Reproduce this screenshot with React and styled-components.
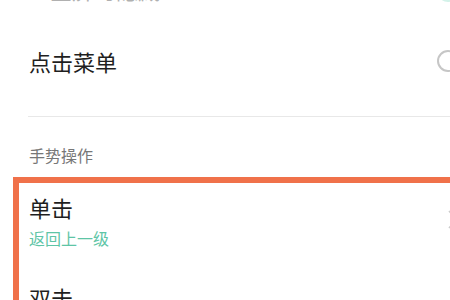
import React from "react";
import styled, { createGlobalStyle } from "styled-components";

const Global = createGlobalStyle`
  html, body { margin: 0; padding: 0; background: #ffffff; }
  body {
    font-family: "Noto Sans CJK SC", "Noto Sans", sans-serif;
    -webkit-font-smoothing: antialiased;
  }
`;

const Viewport = styled.div`
  width: 450px;
  height: 300px;
  overflow: hidden;
  background: #ffffff;
`;

const Screen = styled.div`
  width: 472px;
  display: flex;
  flex-direction: column;
`;

const PrevRow = styled.div`
  height: 50px;
  margin-top: -44px;
  padding: 0 13px 0 29px;
  display: flex;
  align-items: flex-end;
  justify-content: space-between;
  box-sizing: border-box;
`;

const PrevTitle = styled.div`
  font-size: 22px;
  line-height: 30px;
  color: #b0b0b0;
  margin-bottom: 2px;
  padding-left: 21px;
`;

const CheckedDot = styled.div`
  width: 22px;
  height: 22px;
  border-radius: 50%;
  background: #d3f2e9;
  margin-bottom: 4px;
  margin-right: 0;
`;

const ToggleRow = styled.div`
  height: 110px;
  padding: 0 13px 0 29px;
  display: flex;
  align-items: center;
  justify-content: space-between;
  box-sizing: border-box;
`;

const Title = styled.div`
  font-size: 22px;
  line-height: 30px;
  color: #1f1f1f;
`;

const Radio = styled.div`
  width: 22px;
  height: 22px;
  border-radius: 50%;
  border: 2px solid #c6c6c6;
  box-sizing: border-box;
`;

const Divider = styled.div`
  height: 1px;
  margin-left: 28px;
  background: #e8e8e8;
`;

const SectionHeader = styled.div`
  padding: 27px 0 11px 29px;
  font-size: 16px;
  line-height: 22px;
  color: #777777;
`;

const Highlight = styled.div`
  margin-left: 13px;
  border: 6px solid #f0714a;
  border-bottom: none;
  display: flex;
  flex-direction: column;
`;

const ActionRow = styled.div`
  display: flex;
  justify-content: space-between;
  padding: 9px 8px 24px 10px;
`;

const ActionText = styled.div`
  display: flex;
  flex-direction: column;
`;

const Subtitle = styled.div`
  margin-top: 5px;
  font-size: 16px;
  line-height: 22px;
  color: #5ec5a6;
`;

const Chevron = styled.svg`
  width: 10px;
  height: 19px;
  margin-top: 18px;
  flex: none;
`;

const ChevronIcon = () => (
  <Chevron viewBox="0 0 10 19">
    <path d="M1 1 L9 9.5 L1 18" fill="none" stroke="#cccccc" strokeWidth="1.6" />
  </Chevron>
);

const actions = [
  { title: "单击", sub: "返回上一级" },
  { title: "双击", sub: "锁屏" },
];

export default function App() {
  return (
    <>
      <Global />
      <Viewport>
        <Screen>
          <PrevRow>
            <PrevTitle>全屏时隐藏</PrevTitle>
            <CheckedDot />
          </PrevRow>
          <ToggleRow>
            <Title>点击菜单</Title>
            <Radio />
          </ToggleRow>
          <Divider />
          <SectionHeader>手势操作</SectionHeader>
          <Highlight>
            {actions.map((a) => (
              <ActionRow key={a.title}>
                <ActionText>
                  <Title>{a.title}</Title>
                  <Subtitle>{a.sub}</Subtitle>
                </ActionText>
                <ChevronIcon />
              </ActionRow>
            ))}
          </Highlight>
        </Screen>
      </Viewport>
    </>
  );
}
